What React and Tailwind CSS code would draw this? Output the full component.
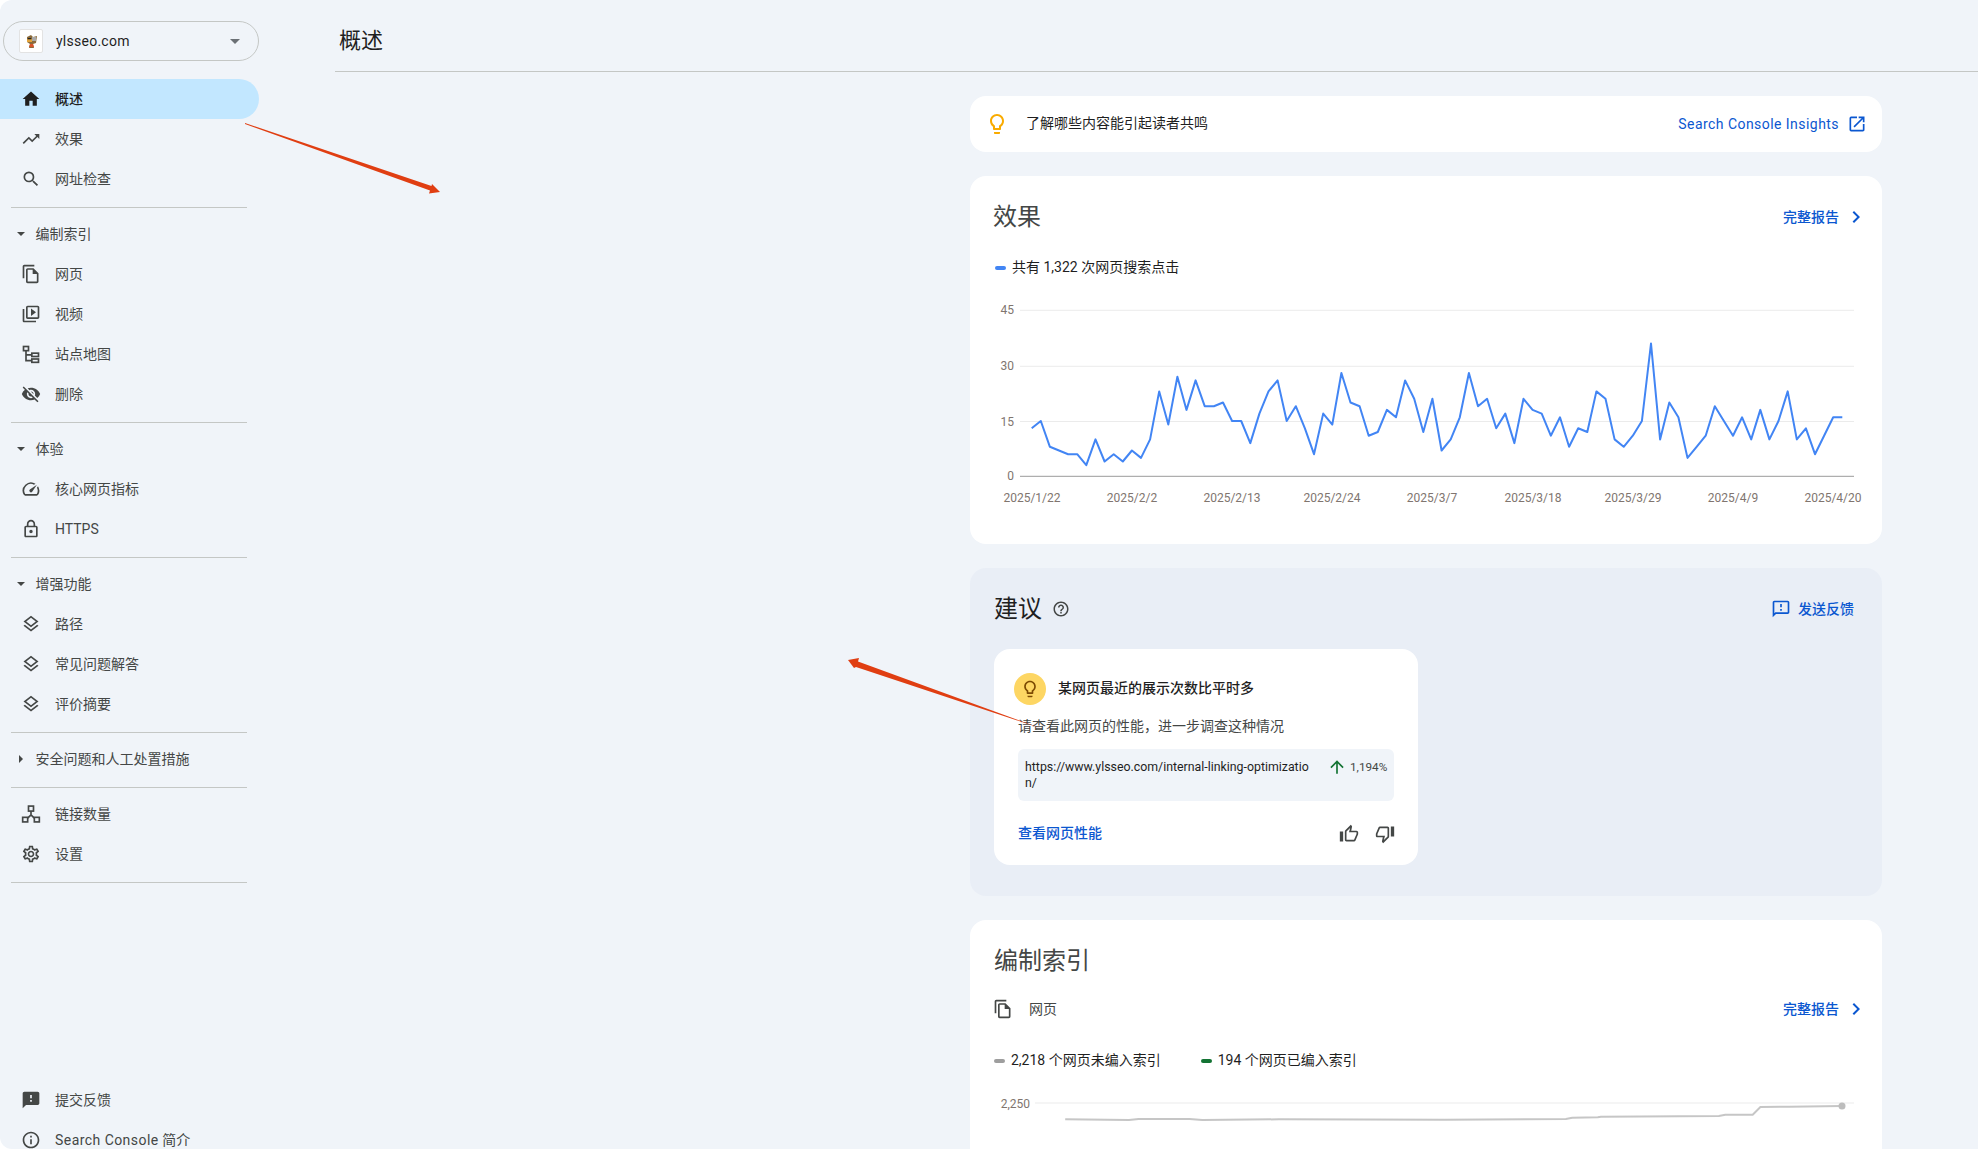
import React from "react";
import {
  MdHome, MdTrendingUp, MdSearch, MdOutlineFileCopy, MdOutlineVideoLibrary, MdVisibilityOff,
  MdOutlineSpeed, MdOutlineLock, MdOutlineLayers, MdOutlineSettings, MdFeedback, MdOutlineFeedback,
  MdOutlineInfo, MdOutlineLightbulb, MdOutlineOpenInNew, MdOutlineHelpOutline, MdArrowUpward,
  MdOutlineThumbUp, MdOutlineThumbDown, MdChevronRight,
} from "react-icons/md";

const font = { fontFamily: 'Roboto, "Noto Sans CJK SC", sans-serif' };

const SitemapIcon = (p) => (
  <svg viewBox="0 0 24 24" width={p.size} height={p.size} fill="none" stroke="currentColor" strokeWidth="2">
    <rect x="3" y="3" width="6" height="5" />
    <rect x="13" y="11" width="8" height="4" />
    <rect x="13" y="18" width="8" height="4" />
    <path d="M6 8v12h7M6 13h7" />
  </svg>
);
const NetworkIcon = (p) => (
  <svg viewBox="0 0 24 24" width={p.size} height={p.size} fill="none" stroke="currentColor" strokeWidth="2">
    <rect x="9" y="2.5" width="6" height="6" />
    <rect x="2" y="16" width="6" height="5.5" />
    <rect x="16" y="16" width="6" height="5.5" />
    <path d="M12 8.5v4.5M8 17l4-4 4 4" />
  </svg>
);

const Item = ({ icon: I, label, active }) => (
  <div className={`flex h-10 w-[259px] shrink-0 items-center gap-[14px] rounded-r-full pl-[21px] text-[14px] ${active ? "bg-[#c2e7ff] font-medium text-[#1f1f1f]" : "text-[#444746]"}`}>
    <span className={`flex w-5 justify-center ${active ? "text-[#1f1f1f]" : "text-[#444746]"}`}><I size={20} /></span>
    <span>{label}</span>
  </div>
);

const Divider = () => <div className="ml-[11px] mt-2 h-px w-[236px] shrink-0 bg-[#c4c7c5]" />;

const Section = ({ label, open = true }) => (
  <div className="mt-[6px] flex h-10 shrink-0 items-center pl-[17px] text-[14px] text-[#444746]">
    <span className="flex w-2 justify-center">
      {open ? (
        <svg width="8" height="4" viewBox="0 0 8 4"><path d="M0 0h8L4 4z" fill="#444746" /></svg>
      ) : (
        <svg width="4" height="8" viewBox="0 0 4 8"><path d="M0 0v8l4-4z" fill="#444746" /></svg>
      )}
    </span>
    <span className="ml-[10.5px]">{label}</span>
  </div>
);

const Sidebar = () => (
  <aside className="flex h-[1149px] w-[335px] shrink-0 flex-col">
    <div className="ml-[3px] mt-[21px] flex h-10 w-[256px] shrink-0 items-center rounded-full border border-[#c4c7c5] pl-[15px] pr-[18px]">
      <span className="flex h-6 w-6 items-center justify-center rounded-[2px] border border-[#e3e3e3] bg-white">
        <svg width="15" height="15" viewBox="0 0 15 15">
          <path d="M3 3l4-2 2 2 4-1-1 7-3 1 1 4H5l1-4-3-2z" fill="#8a6a3a" />
          <rect x="3" y="4" width="5" height="4" fill="#e2a33b" />
          <rect x="3.5" y="4" width="4" height="1.3" fill="#222" />
          <rect x="8" y="3" width="4" height="4" fill="#a8a8a8" />
          <path d="M5 13l1-3 3 0 1 3z" fill="#d8542a" />
        </svg>
      </span>
      <span className="ml-[13px] flex-1 text-[14px] tracking-[0.25px] text-[#1f1f1f]">ylsseo.com</span>
      <svg width="10" height="5" viewBox="0 0 10 5"><path d="M0 0h10L5 5z" fill="#6b7075" /></svg>
    </div>
    <div className="mt-[18px] shrink-0">
      <Item icon={MdHome} label="概述" active />
      <Item icon={MdTrendingUp} label="效果" />
      <Item icon={MdSearch} label="网址检查" />
    </div>
    <Divider />
    <Section label="编制索引" />
    <Item icon={MdOutlineFileCopy} label="网页" />
    <Item icon={MdOutlineVideoLibrary} label="视频" />
    <Item icon={SitemapIcon} label="站点地图" />
    <Item icon={MdVisibilityOff} label="删除" />
    <Divider />
    <Section label="体验" />
    <Item icon={MdOutlineSpeed} label="核心网页指标" />
    <Item icon={MdOutlineLock} label="HTTPS" />
    <Divider />
    <Section label="增强功能" />
    <Item icon={MdOutlineLayers} label="路径" />
    <Item icon={MdOutlineLayers} label="常见问题解答" />
    <Item icon={MdOutlineLayers} label="评价摘要" />
    <Divider />
    <Section label="安全问题和人工处置措施" open={false} />
    <Divider />
    <div className="mt-[6px] shrink-0">
      <Item icon={NetworkIcon} label="链接数量" />
      <Item icon={MdOutlineSettings} label="设置" />
    </div>
    <Divider />
    <div className="mt-[197px] shrink-0">
      <Item icon={MdFeedback} label="提交反馈" />
      <Item icon={MdOutlineInfo} label={<><span className="tracking-[0.45px]">Search Console</span> 简介</>} />
    </div>
  </aside>
);

const values = [13,15,8,7,6,6,3,10,4,6,4,7,5,10,23,14,27,18,26,19,19,20,15,15,9,17,23,26,15,19,13,6,17,14,28,20,19,11,12,18,16,26,21,12,21,7,10,16,28,19,21,13,17,9,21,18,17,11,16,8,13,12,23,21,10,8,11,15,36,10,20,16,5,8,11,19,15,11,16,10,18,10,15,23,10,13,6,11,16,16];

const PerfChart = () => {
  const X0 = 61.7, dx = 810.6 / (values.length - 1), Y0 = 185.3, u = 3.69;
  const pts = values.map((v, i) => `${(X0 + i * dx).toFixed(1)},${(Y0 - v * u).toFixed(1)}`).join(" ");
  const grid = [[45, 19.3], [30, 75.3], [15, 130.5]];
  const dates = [["2025/1/22", 62], ["2025/2/2", 162], ["2025/2/13", 262], ["2025/2/24", 362], ["2025/3/7", 462], ["2025/3/18", 563], ["2025/3/29", 663], ["2025/4/9", 763], ["2025/4/20", 863]];
  return (
    <svg width="912" height="240" className="mt-[13px] block" style={font}>
      {grid.map(([l, y]) => (
        <g key={l}>
          <line x1="50" x2="884" y1={y} y2={y} stroke="#ebebeb" />
          <text x="44" y={y + 4} textAnchor="end" fontSize="12" fill="#80756f">{l}</text>
        </g>
      ))}
      <line x1="50" x2="884" y1={Y0} y2={Y0} stroke="#9a9a9a" />
      <text x="44" y={Y0 + 4} textAnchor="end" fontSize="12" fill="#80756f">0</text>
      <polyline points={pts} fill="none" stroke="#4285f4" strokeWidth="2" strokeLinejoin="round" />
      {dates.map(([d, x]) => (
        <text key={d} x={x} y="211" textAnchor="middle" fontSize="12" fill="#80756f">{d}</text>
      ))}
    </svg>
  );
};

const indexPts = [[165,652],[265,654],[280,651],[360,651],[380,654],[500,652],[760,653],[950,651],[960,647],[1000,646],[1005,644],[1190,642],[1200,638],[1243,638],[1255,615],[1300,614],[1383,612]]
  .map(([x, y]) => `${(x / 1.568 - 10).toFixed(1)},${(y / 3 + 900 - 1090).toFixed(1)}`).join(" ");

const IndexChart = () => (
  <svg width="912" height="60" className="mt-[21px] block" style={font}>
    <line x1="65" x2="884" y1="11" y2="11" stroke="#ebebeb" />
    <text x="60" y="16" textAnchor="end" fontSize="12" fill="#80756f">2,250</text>
    <polyline points={indexPts} fill="none" stroke="#c6c6c6" strokeWidth="2" />
    <circle cx="872" cy="14" r="3.5" fill="#bdbdbd" />
  </svg>
);

const FullReport = () => (
  <span className="flex items-center text-[14px] font-medium text-[#0b57d0]">
    完整报告
    <MdChevronRight size={24} className="ml-[5px] mr-[-7px]" />
  </span>
);

const Dash = ({ c }) => <span className={`h-1 w-[11px] rounded-full ${c}`} />;

const Main = () => (
  <div className="min-w-0 flex-1">
    <header className="flex h-[72px] items-center border-b border-[#c4c7c5] pt-[9px]">
      <h1 className="pl-[4px] text-[22px] font-normal text-[#1f1f1f]">概述</h1>
    </header>
    <div className="ml-[635px] mt-[24px] flex w-[912px] flex-col gap-6">
      <div className="flex h-14 items-center rounded-2xl bg-white pl-[17px] pr-[15px]">
        <MdOutlineLightbulb size={24} className="ml-[-2px] text-[#f9ab00]" />
        <span className="ml-[17px] mt-[-1px] flex-1 text-[14px] text-[#1f1f1f]">了解哪些内容能引起读者共鸣</span>
        <span className="text-[14px] tracking-[0.45px] text-[#0b57d0]">Search Console Insights</span>
        <MdOutlineOpenInNew size={20} className="ml-[8px] text-[#0b57d0]" />
      </div>

      <section className="h-[368px] rounded-2xl bg-white pl-0 pt-[21px]">
        <div className="flex h-10 items-center justify-between pl-[23px] pr-[21px]">
          <h2 className="text-[24px] font-normal text-[#444746]">效果</h2>
          <FullReport />
        </div>
        <div className="mt-[20px] flex items-center gap-[6px] pl-[25px] text-[14px] text-[#1f1f1f]">
          <Dash c="bg-[#4285f4]" />
          <span>共有 1,322 次网页搜索点击</span>
        </div>
        <PerfChart />
      </section>

      <section className="h-[328px] rounded-2xl bg-[#e9eef6] px-[24px] pt-[21px]">
        <div className="flex h-10 items-center pr-[4px]">
          <h2 className="text-[24px] font-normal text-[#1f1f1f]">建议</h2>
          <MdOutlineHelpOutline size={18} className="ml-[10px] text-[#444746]" />
          <span className="ml-auto flex items-center gap-[7px] text-[14px] font-medium text-[#0b57d0]">
            <MdOutlineFeedback size={20} />
            发送反馈
          </span>
        </div>
        <div className="mt-[20px] h-[216px] w-[424px] rounded-2xl bg-white pl-[24px] pr-[24px] pt-[24px]">
          <div className="ml-[-4px] flex items-center gap-3">
            <span className="flex h-8 w-8 items-center justify-center rounded-full bg-[#fdd663]">
              <MdOutlineLightbulb size={20} className="text-[#7c4a03]" />
            </span>
            <span className="mt-[-1px] text-[14px] font-medium text-[#1f1f1f]">某网页最近的展示次数比平时多</span>
          </div>
          <p className="mt-[11px] text-[14px] leading-5 text-[#444746]">请查看此网页的性能，进一步调查这种情况</p>
          <div className="mt-[13px] flex h-[52px] w-[376px] rounded-md bg-[#f0f4f9] pl-[7px] pr-[6px] pt-[10px] text-[12.35px] leading-4 text-[#1f1f1f]">
            <span className="w-[286px] break-all">https://www.ylsseo.com/internal-linking-optimization/</span>
            <MdArrowUpward size={20} className="ml-[16px] mt-[-2px] shrink-0 text-[#137333]" />
            <span className="ml-[3px] text-[11.75px] text-[#444746]">1,194%</span>
          </div>
          <div className="mt-[22px] flex items-center justify-between">
            <span className="text-[14px] font-medium text-[#0b57d0]">查看网页性能</span>
            <span className="mr-[-1px] flex items-center gap-[16px] text-[#444746]">
              <MdOutlineThumbUp size={20} />
              <MdOutlineThumbDown size={20} />
            </span>
          </div>
        </div>
      </section>

      <section className="h-[260px] rounded-2xl bg-white pt-[21px]">
        <h2 className="pl-[24px] text-[24px] font-normal leading-10 text-[#444746]">编制索引</h2>
        <div className="mt-[16px] flex h-6 items-center justify-between pl-[23px] pr-[21px]">
          <span className="flex items-center text-[14px] text-[#444746]">
            <MdOutlineFileCopy size={20} />
            <span className="ml-[16px]">网页</span>
          </span>
          <FullReport />
        </div>
        <div className="mt-[29px] flex items-center pl-[24px] text-[14px] text-[#1f1f1f]">
          <Dash c="bg-[#9e9e9e]" />
          <span className="ml-[6px]">2,218 个网页未编入索引</span>
          <span className="ml-[40px]"><Dash c="block bg-[#137333]" /></span>
          <span className="ml-[6px]">194 个网页已编入索引</span>
        </div>
        <IndexChart />
      </section>
    </div>
  </div>
);

const Arrows = () => (
  <svg width="1978" height="1149" className="pointer-events-none absolute left-0 top-0">
    <polygon points="245,123 431.5,186 432,184 440,192 429,193.5 430,190.5 245,124" fill="#e03e12" />
    <polygon points="848,660 859,658 858,661.5 1043,729 856,667 854,668" fill="#e03e12" />
  </svg>
);

export default function App() {
  return (
    <div className="relative h-[1149px] w-[1978px] overflow-hidden bg-white" style={font}>
      <div className="flex h-full overflow-hidden rounded-l-[12px] bg-[#f0f4f9]">
        <Sidebar />
        <Main />
      </div>
      <Arrows />
    </div>
  );
}
